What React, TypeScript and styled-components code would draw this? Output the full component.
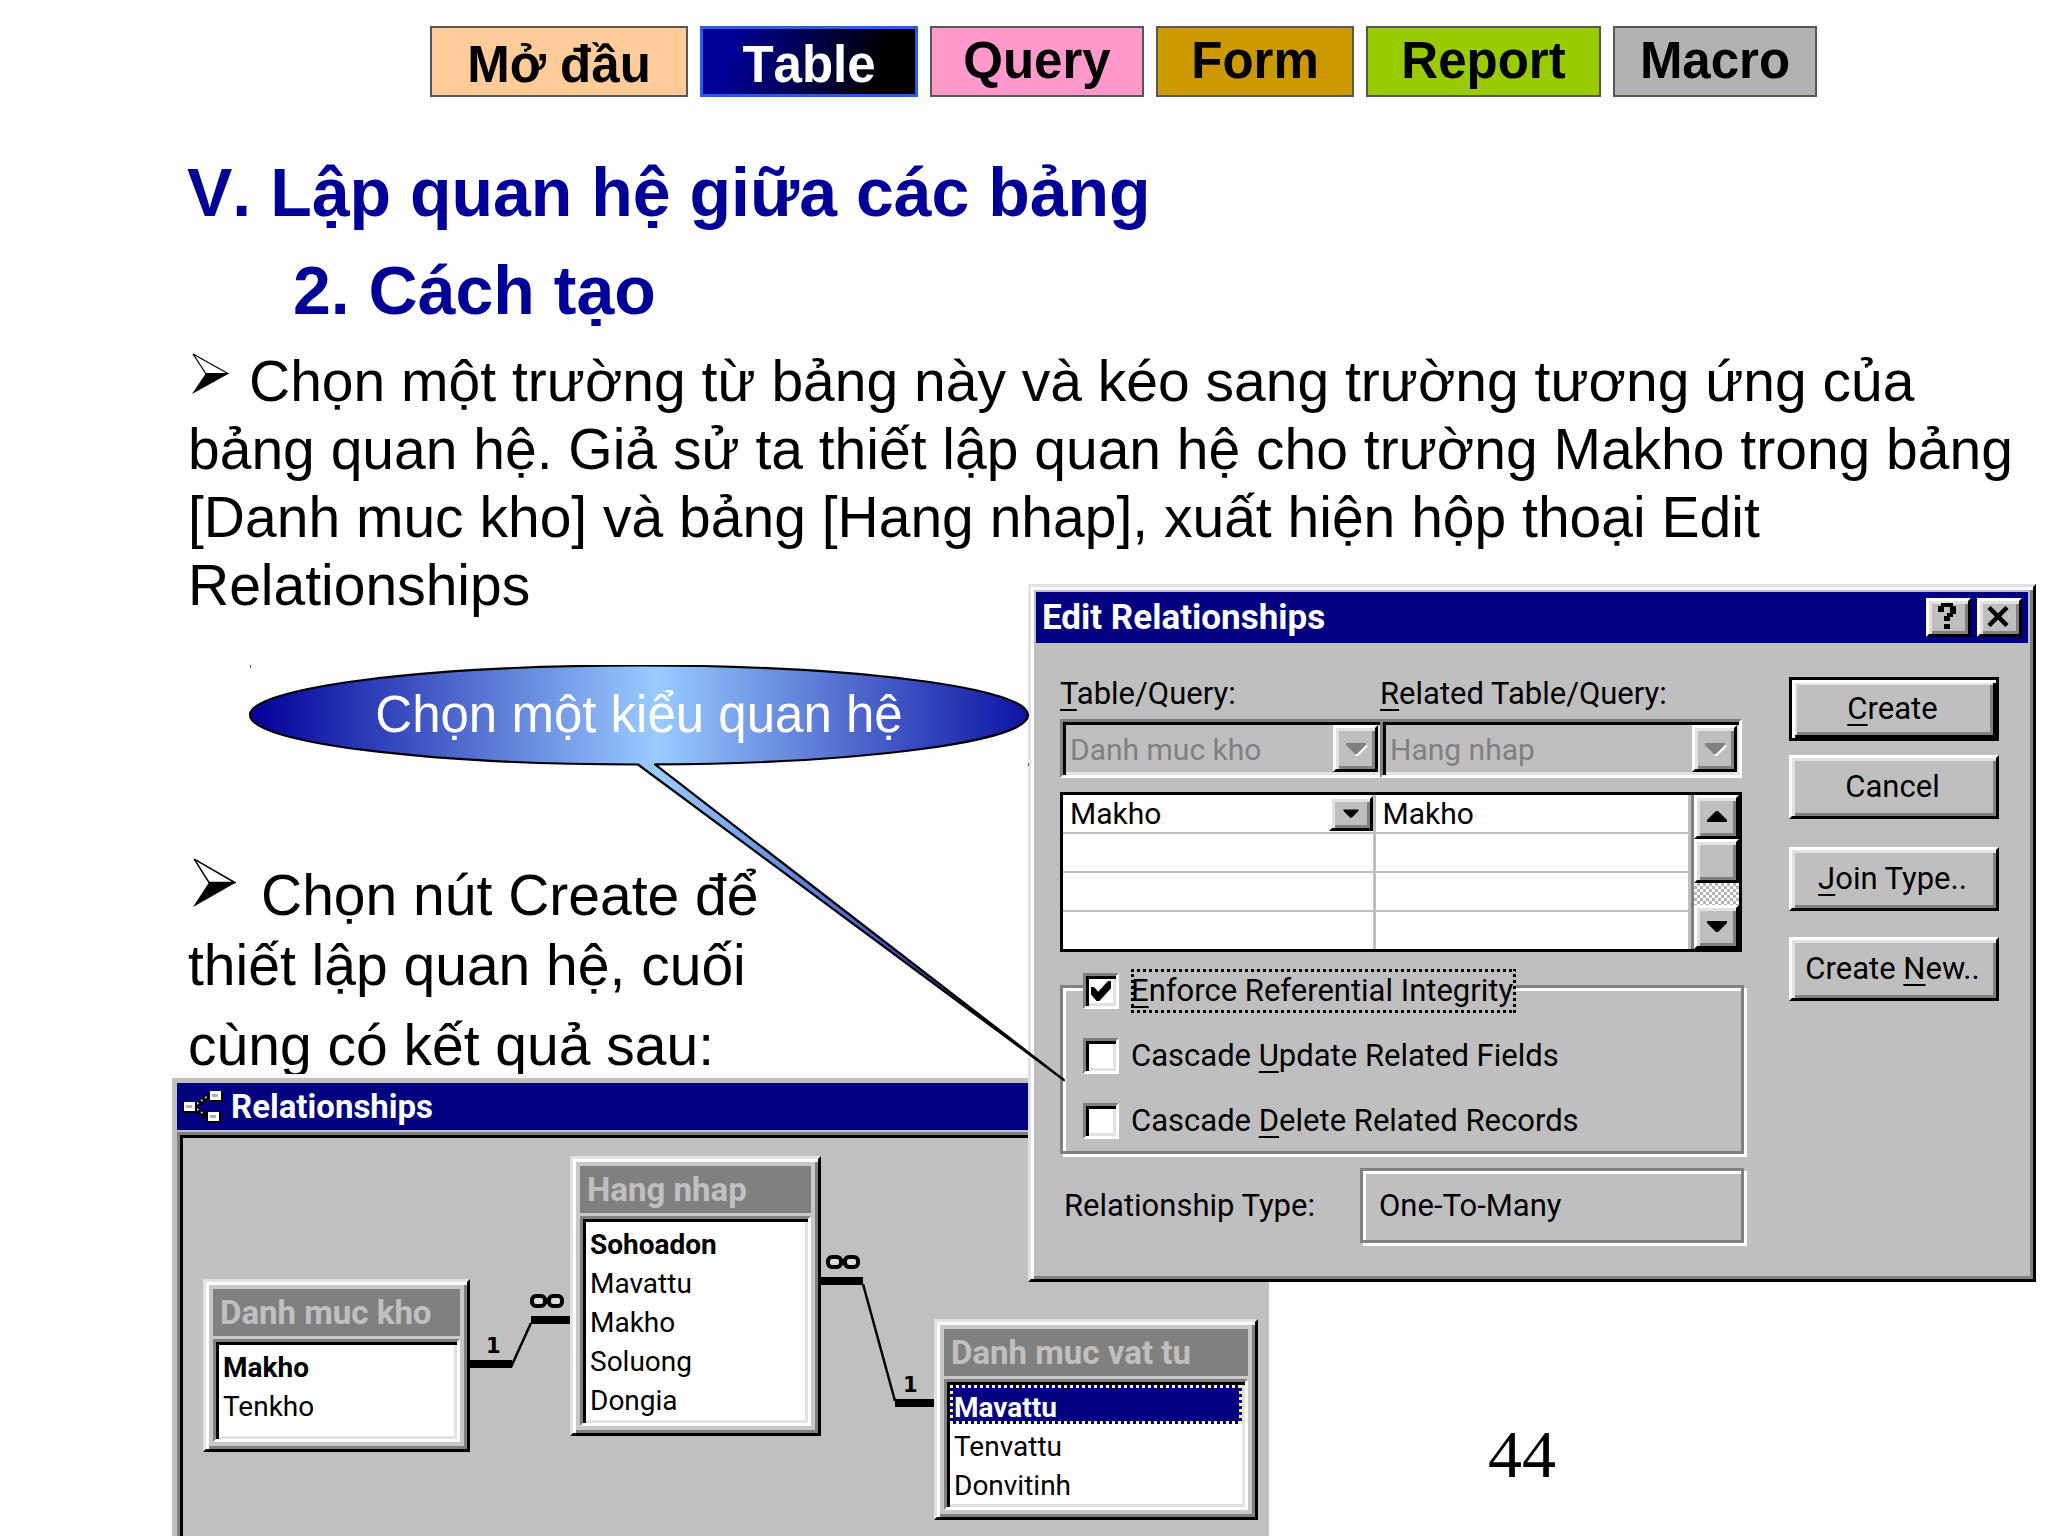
import React from 'react';
import styled, { createGlobalStyle, css } from 'styled-components';

const face = '#c0bfc0';
const shade = '#808080';
const light = '#e2e2e2';
const navy = '#000080';

const slideFont = '"Liberation Sans", Arial, sans-serif';
const systemFont = 'Roboto, "Liberation Sans", sans-serif';

const GlobalStyle = createGlobalStyle`
  *, *::before, *::after { box-sizing: border-box; }
  body { margin: 0; background: #fefefe; color: #000; font-family: ${slideFont}; }
  h1, h2, p, ul { margin: 0; padding: 0; }
`;

const raised = css`
  border: 3px solid;
  border-color: #fff #000 #000 #fff;
  box-shadow: inset 3px 3px 0 ${light}, inset -3px -3px 0 ${shade};
`;

const sunken = css`
  border: 3px solid;
  border-color: ${shade} #fff #fff ${shade};
  box-shadow: inset 3px 3px 0 #000, inset -3px -3px 0 ${light};
`;

const etched = css`
  border: 3px solid ${shade};
  box-shadow: inset 3px 3px 0 #fff, 3px 3px 0 #fff;
`;

const frame = css`
  border: 3px solid;
  border-color: ${light} #000 #000 ${light};
  box-shadow: inset 3px 3px 0 #fff, inset -3px -3px 0 ${shade};
`;

const dots = (color: string) => css`
  background-image:
    repeating-linear-gradient(90deg, ${color} 0 3px, transparent 3px 6px),
    repeating-linear-gradient(90deg, ${color} 0 3px, transparent 3px 6px),
    repeating-linear-gradient(0deg, ${color} 0 3px, transparent 3px 6px),
    repeating-linear-gradient(0deg, ${color} 0 3px, transparent 3px 6px);
  background-size: 100% 3px, 100% 3px, 3px 100%, 3px 100%;
  background-position: 0 0, 0 100%, 0 0, 100% 0;
  background-repeat: no-repeat;
`;

/* ---------- slide ---------- */

const Slide = styled.main`
  position: relative;
  display: flex;
  flex-direction: column;
  min-height: 100vh;
  overflow: hidden;
`;

const Nav = styled.nav`
  display: flex;
  gap: 12px;
  padding: 26px 0 0 430px;
`;

const NavLink = styled.a<{ $width: number; $fill: string; $active?: boolean; $low?: boolean }>`
  flex: 0 0 ${(p) => p.$width}px;
  height: 71px;
  padding-top: ${(p) => (p.$low ? 11 : 7)}px;
  border: 2px solid #5c5650;
  background: ${(p) => p.$fill};
  color: #000;
  font-size: 51px;
  font-weight: 700;
  font-kerning: none;
  line-height: 52px;
  text-align: center;
  text-decoration: none;
  ${(p) =>
    p.$active &&
    css`
      border: 3px solid #2f5be0;
      padding-top: 10px;
      color: #fff;
    `}
`;

const Headings = styled.header`
  padding: 46px 20px 0 187px;
  color: #000099;
  font-kerning: none;
`;

const Title = styled.h1`
  font-size: 68px;
  line-height: 98px;
`;

const Subtitle = styled.h2`
  padding-left: 106px;
  font-size: 68px;
  line-height: 98px;
`;

const Lead = styled.p`
  padding: 8px 20px 0 188px;
  font-size: 57px;
  line-height: 68px;
`;

const Steps = styled.div`
  width: 780px;
  padding: 239px 0 0 188px;
  font-size: 57px;
`;

const Step = styled.p`
  line-height: 70px;
`;

const StepEnd = styled.p`
  padding-top: 10px;
  line-height: 70px;
  white-space: nowrap;
`;

const BulletMark = styled.svg<{ $wide?: boolean }>`
  width: ${(p) => (p.$wide ? 43 : 37)}px;
  height: ${(p) => (p.$wide ? 49 : 41)}px;
  margin: ${(p) => (p.$wide ? '0 25px 8px 5px' : '0 20px 7px 4px')};
  vertical-align: baseline;
`;

const BottomRow = styled.div`
  flex: 1;
  display: flex;
  align-items: stretch;
  margin-top: -6px;
  padding-left: 172px;
`;

const PageNumber = styled.footer`
  align-self: flex-end;
  padding: 0 0 44px 219px;
  font-family: "Liberation Serif", "Times New Roman", serif;
  font-size: 68px;
  line-height: 78px;
`;

/* ---------- relationships window ---------- */

const MapWindow = styled.section`
  position: relative;
  flex: 0 0 1097px;
  display: flex;
  flex-direction: column;
  height: 463px;
  padding: 5px 0 0 5px;
  border-top: 4px solid #f8f8f8;
  background: #c0c0c0;
  font-family: ${systemFont};
`;

const MapTitle = styled.div`
  display: flex;
  align-items: center;
  gap: 8px;
  height: 47px;
  padding-left: 6px;
  background: ${navy};
  color: #fff;
  font-size: 33px;
  font-weight: 700;
  line-height: 46px;
`;

const Canvas = styled.div`
  position: relative;
  flex: 1;
  margin: 5px 0 0 3px;
  border: solid #000;
  border-width: 3px 0 0 3px;
  outline: 3px solid ${shade};
  clip-path: inset(-3px 0 0 -3px);
`;

const Links = styled.svg`
  position: absolute;
  left: 0;
  top: 0;
  width: 1086px;
  height: 399px;
`;

const Node = styled.article<{ $x: number; $y: number; $w: number; $h: number }>`
  position: absolute;
  left: ${(p) => p.$x}px;
  top: ${(p) => p.$y}px;
  display: flex;
  flex-direction: column;
  gap: 3px;
  width: ${(p) => p.$w}px;
  height: ${(p) => p.$h}px;
  padding: 7px;
  background: #c8c8c8;
  ${frame}
`;

const NodeTitle = styled.div`
  height: 47px;
  padding: 2px 0 0 7px;
  background: ${shade};
  color: #c0c0c0;
  font-size: 33px;
  font-weight: 700;
  line-height: 44px;
  white-space: nowrap;
`;

const FieldList = styled.ul`
  flex: 1;
  padding: 3px;
  background: #fff;
  list-style: none;
  ${sunken}
`;

const FieldItem = styled.li<{ $key?: boolean; $selected?: boolean }>`
  height: 39px;
  padding: 7px 0 0 4px;
  font-size: 28px;
  font-weight: ${(p) => (p.$key ? 700 : 400)};
  line-height: 32px;
  ${(p) =>
    p.$selected &&
    css`
      background-color: ${navy};
      color: #fff;
      ${dots('#ffff80')}
    `}
`;

/* ---------- dialog ---------- */

const Dialog = styled.section`
  position: absolute;
  left: 1028px;
  top: 584px;
  width: 1008px;
  height: 698px;
  padding: 5px;
  background: ${face};
  font-family: ${systemFont};
  font-size: 31px;
  line-height: 36px;
  ${frame}

  u {
    text-decoration-thickness: 2px;
    text-underline-offset: 5px;
    text-decoration-skip-ink: none;
  }
`;

const DialogTitle = styled.div`
  display: flex;
  align-items: center;
  gap: 6px;
  height: 51px;
  padding: 0 6px 0 6px;
  background: ${navy};
  color: #fff;
  font-size: 35px;
  font-weight: 700;
  line-height: 50px;
`;

const DialogName = styled.span`
  flex: 1;
`;

const CaptionButton = styled.button`
  display: grid;
  place-items: center;
  width: 45px;
  height: 39px;
  padding: 0 3px 3px 0;
  background: ${face};
  ${raised}
`;

const DialogBody = styled.div`
  display: grid;
  grid-template-columns: 1fr 210px;
  gap: 42px;
  padding: 33px 29px 0 24px;
`;

const Form = styled.div`
  display: flex;
  flex-direction: column;
`;

const ComboRow = styled.div`
  display: grid;
  grid-template-columns: 320px 1fr;
  margin-right: 5px;
`;

const Field = styled.div`
  display: flex;
  flex-direction: column;
  gap: 7px;
`;

const Combo = styled.div<{ $joined?: boolean }>`
  display: flex;
  height: 59px;
  font-size: 30px;
  ${sunken}
  ${(p) => p.$joined && 'border-right-width: 0;'}
`;

const ComboSelect = styled.select`
  flex: 1;
  min-width: 0;
  padding: 2px 0 0 7px;
  border: 0;
  appearance: none;
  background: transparent;
  color: #000;
  font: inherit;

  &:disabled {
    color: ${shade};
    opacity: 1;
  }
`;

const ComboArrow = styled.span`
  display: grid;
  place-items: center;
  width: 45px;
  margin: 3px 2px 3px 0;
  background: ${face};
  ${raised}
`;

const GridBox = styled.div`
  display: flex;
  width: 682px;
  height: 160px;
  margin-top: 14px;
  border: 3px solid #000;
  background: #fff;
  font-size: 30px;
`;

const TableArea = styled.div`
  flex: 1;
`;

const FieldTable = styled.table`
  width: 100%;
  table-layout: fixed;
  border-spacing: 0;
`;

const Cell = styled.td`
  width: 50%;
  height: 39px;
  padding: 0;
  border-bottom: 2px solid ${face};

  &:first-child {
    border-right: 3px solid ${face};
  }

  tr:last-child > & {
    height: 37px;
    border-bottom: 0;
  }
`;

const CellContent = styled.div`
  display: flex;
  align-items: center;
  justify-content: space-between;
  height: 37px;
  padding-left: 7px;
`;

const CellArrow = styled.button`
  display: grid;
  place-items: center;
  width: 44px;
  height: 35px;
  padding: 0;
  background: ${face};
  ${raised}
`;

const ScrollBar = styled.div`
  display: flex;
  flex-direction: column;
  width: 51px;
  border-left: 3px solid ${face};
  box-shadow: inset 3px 0 0 ${shade};
  padding-left: 3px;
`;

const ScrollButton = styled.button`
  display: grid;
  place-items: center;
  height: 44px;
  padding: 0;
  background: ${face};
  ${raised}
`;

const ScrollTrack = styled.div`
  flex: 1;
  background: repeating-conic-gradient(#b4b4b4 0 25%, #fff 0 50%) 0 0 / 6px 6px;
`;

const CheckGroup = styled.div`
  display: flex;
  flex-direction: column;
  align-items: flex-start;
  gap: 21px;
  height: 169px;
  margin: 33px 3px 0 0;
  padding-left: 20px;
  ${etched}
`;

const CheckRow = styled.label`
  display: flex;
  align-items: center;
  gap: 12px;
  height: 44px;

  &:first-child {
    margin-top: -19px;
    background: ${face};
  }
`;

const CheckBox = styled.input`
  display: grid;
  place-content: center;
  width: 36px;
  height: 36px;
  margin: 0;
  appearance: none;
  background: #fff;
  ${sunken}

  &:checked::before {
    content: "";
    width: 20px;
    height: 20px;
    background: #000;
    clip-path: polygon(0 30%, 15% 30%, 36% 54%, 85% 0, 100% 0, 100% 36%, 42% 100%, 28% 100%, 0 68%);
  }
`;

const CheckText = styled.span<{ $focused?: boolean }>`
  padding: 4px 3px 4px 0;
  ${(p) => p.$focused && dots('#000')}
`;

const TypeRow = styled.div`
  display: flex;
  align-items: center;
  justify-content: space-between;
  margin: 14px 3px 0 0;
  padding-left: 4px;
`;

const TypeBox = styled.output`
  width: 384px;
  height: 75px;
  padding-left: 16px;
  line-height: 70px;
  ${etched}
`;

const Actions = styled.div`
  display: flex;
  flex-direction: column;
  padding-top: 1px;
`;

const ActionButton = styled.button<{ $gap?: number; $primary?: boolean }>`
  height: 64px;
  margin-top: ${(p) => p.$gap ?? 0}px;
  padding: 0 3px 0 0;
  background: ${face};
  color: #000;
  font: inherit;
  white-space: nowrap;
  ${raised}
  ${(p) =>
    p.$primary &&
    css`
      border-color: #000;
      box-shadow: inset 3px 3px 0 #fff, inset -3px -3px 0 #000, inset 5px 5px 0 ${light}, inset -6px -6px 0 ${shade};
    `}
`;

/* ---------- callout ---------- */

const Callout = styled.aside`
  position: absolute;
  left: 249px;
  top: 665px;
  width: 820px;
  pointer-events: none;
`;

const CalloutShape = styled.svg`
  position: absolute;
  left: 0;
  top: 0;
`;

const CalloutText = styled.p`
  position: relative;
  width: 780px;
  color: #fff;
  font-size: 51px;
  line-height: 100px;
  text-align: center;
`;

/* ---------- drawings ---------- */

const Bullet = ({ wide }: { wide?: boolean }) => (
  <BulletMark $wide={wide} viewBox="0 0 35 40" preserveAspectRatio="none" aria-hidden="true">
    <path d="M1 1 L34 20 L13 20 Z" fill="#fff" stroke="#000" strokeWidth="1.2" />
    <path d="M0 40 L13 20 L35 20 Z" fill="#000" />
  </BulletMark>
);

const Triangle = ({ up, muted, small }: { up?: boolean; muted?: boolean; small?: boolean }) => (
  <svg width={small ? 18 : 24} height={small ? 12 : 16} viewBox="0 0 24 16" aria-hidden="true">
    {muted && <path d="M24 5 L14 15 L11 15 L20 3 Z" fill="#fff" />}
    {up ? (
      <path d="M2 13 H22 V11 L13 2 H11 L2 11 Z" fill="#000" />
    ) : (
      <path d="M2 2 H22 V4 L13 13 H11 L2 4 Z" fill={muted ? shade : '#000'} />
    )}
  </svg>
);

const HelpGlyph = () => (
  <svg width="18" height="27" viewBox="0 0 18 27" shapeRendering="crispEdges" aria-hidden="true">
    <path d="M3 0H15V3H18V11H15V14H12V18H6V13H9V10H12V4H6V9H0V3H3Z M6 21H12V26H6Z" fill="#000" />
  </svg>
);

const CloseGlyph = () => (
  <svg width="24" height="21" viewBox="0 0 24 21" aria-hidden="true">
    <path d="M3 1.5 L21 19.5 M21 1.5 L3 19.5" stroke="#000" strokeWidth="4.5" />
  </svg>
);

const MapIcon = () => (
  <svg width="40" height="32" viewBox="0 0 40 32" aria-hidden="true">
    <path d="M12 15 L26 5 M12 17 L24 26" stroke="#000" strokeWidth="5" />
    <path d="M14 13 L26 4 M14 18 L22 24" stroke="#c0c0c0" strokeWidth="2" strokeDasharray="2 3" />
    {[
      [0, 11],
      [26, 0],
      [24, 21],
    ].map(([x, y]) => (
      <g key={x}>
        <rect x={x} y={y} width="14" height="11" fill="#000" />
        <rect x={x + 1} y={y} width="11" height="9" fill="#fff" />
        <rect x={x + 3} y={y + 3} width="6" height="3" fill="#b0b0b0" />
      </g>
    ))}
  </svg>
);

const ManySign = ({ x, y }: { x: number; y: number }) => (
  <g transform={`translate(${x} ${y})`} fill="#dcdcdc" stroke="#000" strokeWidth="4">
    <rect x="2" y="2" width="13" height="10" rx="4" />
    <rect x="19" y="2" width="13" height="10" rx="4" />
    <path d="M14 7 H20" strokeWidth="6" />
  </g>
);

/* ---------- data ---------- */

const navItems = [
  { label: 'Mở đầu', width: 258, fill: '#ffcc99', low: true },
  { label: 'Table', width: 218, fill: 'linear-gradient(100deg, #000099 12%, #000 85%)', active: true },
  { label: 'Query', width: 214, fill: '#ff99cc' },
  { label: 'Form', width: 198, fill: '#cc9900' },
  { label: 'Report', width: 235, fill: '#99cc00' },
  { label: 'Macro', width: 204, fill: '#b2b2b2' },
];

const nodes = [
  { name: 'Danh muc kho', x: 20, y: 141, w: 267, h: 173, fields: ['Makho', 'Tenkho'] },
  { name: 'Hang nhap', x: 387, y: 18, w: 251, h: 280, fields: ['Sohoadon', 'Mavattu', 'Makho', 'Soluong', 'Dongia'] },
  { name: 'Danh muc vat tu', x: 751, y: 181, w: 324, h: 201, fields: ['Mavattu', 'Tenvattu', 'Donvitinh'], selected: 0 },
];

export default function App() {
  return (
    <>
      <GlobalStyle />
      <Slide>
        <Nav>
          {navItems.map((item) => (
            <NavLink
              key={item.label}
              href={`#${item.label}`}
              $width={item.width}
              $fill={item.fill}
              $active={item.active}
              $low={item.low}
            >
              {item.label}
            </NavLink>
          ))}
        </Nav>

        <Headings>
          <Title>V. Lập quan hệ giữa các bảng</Title>
          <Subtitle>2. Cách tạo</Subtitle>
        </Headings>

        <Lead>
          <Bullet />
          Chọn một trường từ bảng này và kéo sang trường tương ứng của bảng quan hệ. Giả sử ta thiết lập quan hệ cho
          trường Makho trong bảng [Danh muc kho] và bảng [Hang nhap], xuất hiện hộp thoại Edit Relationships
        </Lead>

        <Steps>
          <Step>
            <Bullet wide />
            Chọn nút Create để thiết lập quan hệ, cuối
          </Step>
          <StepEnd>cùng có kết quả sau:</StepEnd>
        </Steps>

        <BottomRow>
          <MapWindow aria-label="Relationships">
            <MapTitle>
              <MapIcon />
              Relationships
            </MapTitle>
            <Canvas>
              {nodes.map((node) => (
                <Node key={node.name} $x={node.x} $y={node.y} $w={node.w} $h={node.h}>
                  <NodeTitle>{node.name}</NodeTitle>
                  <FieldList>
                    {node.fields.map((field, i) => (
                      <FieldItem key={field} $key={i === 0} $selected={node.selected === i}>
                        {field}
                      </FieldItem>
                    ))}
                  </FieldList>
                </Node>
              ))}
              <Links viewBox="0 0 1086 399" fontFamily="DejaVu Sans" fontWeight="700" fontSize="21">
                <path d="M287 226 H329 M348 182 H387 M638 143 H680 M712 265 H751" stroke="#000" strokeWidth="8" />
                <path d="M328 229 L348 185 M680 146 L712 263" stroke="#000" strokeWidth="2.5" />
                <ManySign x={347} y={156} />
                <ManySign x={643} y={117} />
                <text x="303" y="215">1</text>
                <text x="720" y="254">1</text>
              </Links>
            </Canvas>
          </MapWindow>
          <PageNumber>44</PageNumber>
        </BottomRow>

        <Dialog role="dialog" aria-label="Edit Relationships">
          <DialogTitle>
            <DialogName>Edit Relationships</DialogName>
            <CaptionButton type="button" aria-label="Help">
              <HelpGlyph />
            </CaptionButton>
            <CaptionButton type="button" aria-label="Close">
              <CloseGlyph />
            </CaptionButton>
          </DialogTitle>
          <DialogBody>
            <Form>
              <ComboRow>
                <Field>
                  <label htmlFor="table">
                    <u>T</u>able/Query:
                  </label>
                  <Combo $joined>
                    <ComboSelect id="table" disabled>
                      <option>Danh muc kho</option>
                    </ComboSelect>
                    <ComboArrow>
                      <Triangle muted />
                    </ComboArrow>
                  </Combo>
                </Field>
                <Field>
                  <label htmlFor="related">
                    <u>R</u>elated Table/Query:
                  </label>
                  <Combo>
                    <ComboSelect id="related" disabled>
                      <option>Hang nhap</option>
                    </ComboSelect>
                    <ComboArrow>
                      <Triangle muted />
                    </ComboArrow>
                  </Combo>
                </Field>
              </ComboRow>

              <GridBox>
                <TableArea>
                  <FieldTable>
                    <tbody>
                      <tr>
                        <Cell>
                          <CellContent>
                            Makho
                            <CellArrow type="button" aria-label="Choose field">
                              <Triangle small />
                            </CellArrow>
                          </CellContent>
                        </Cell>
                        <Cell>
                          <CellContent>Makho</CellContent>
                        </Cell>
                      </tr>
                      {[1, 2, 3].map((row) => (
                        <tr key={row}>
                          <Cell />
                          <Cell />
                        </tr>
                      ))}
                    </tbody>
                  </FieldTable>
                </TableArea>
                <ScrollBar>
                  <ScrollButton type="button" aria-label="Scroll up">
                    <Triangle up />
                  </ScrollButton>
                  <ScrollButton type="button" aria-label="Scroll thumb" />
                  <ScrollTrack />
                  <ScrollButton type="button" aria-label="Scroll down">
                    <Triangle />
                  </ScrollButton>
                </ScrollBar>
              </GridBox>

              <CheckGroup role="group">
                <CheckRow>
                  <CheckBox type="checkbox" defaultChecked />
                  <CheckText $focused>
                    <u>E</u>nforce Referential Integrity
                  </CheckText>
                </CheckRow>
                <CheckRow>
                  <CheckBox type="checkbox" />
                  <CheckText>
                    Cascade <u>U</u>pdate Related Fields
                  </CheckText>
                </CheckRow>
                <CheckRow>
                  <CheckBox type="checkbox" />
                  <CheckText>
                    Cascade <u>D</u>elete Related Records
                  </CheckText>
                </CheckRow>
              </CheckGroup>

              <TypeRow>
                Relationship Type:
                <TypeBox>One-To-Many</TypeBox>
              </TypeRow>
            </Form>

            <Actions>
              <ActionButton type="button" $primary>
                <u>C</u>reate
              </ActionButton>
              <ActionButton type="button" $gap={14}>
                Cancel
              </ActionButton>
              <ActionButton type="button" $gap={28}>
                <u>J</u>oin Type..
              </ActionButton>
              <ActionButton type="button" $gap={26}>
                Create <u>N</u>ew..
              </ActionButton>
            </Actions>
          </DialogBody>
        </Dialog>

        <Callout>
          <CalloutShape width="820" height="418" viewBox="0 0 820 418" aria-hidden="true">
            <defs>
              <linearGradient id="glow" x1="0" x2="1" y1="0" y2="0">
                <stop offset="0" stopColor="#000099" />
                <stop offset="0.5" stopColor="#99ccff" />
                <stop offset="1" stopColor="#000099" />
              </linearGradient>
            </defs>
            <path
              d="M389 99.500 L815 415 L406 99.460 A389 49.500 0 0 0 779 50 A389 49.500 0 0 0 1 50 A389 49.500 0 0 0 389 99.500 Z"
              fill="url(#glow)"
              stroke="#000"
              strokeWidth="2.200"
              strokeLinejoin="round"
            />
            <path d="M1.500 0 V3 M779.500 98 V101" stroke="#555" strokeWidth="1" />
          </CalloutShape>
          <CalloutText>Chọn một kiểu quan hệ</CalloutText>
        </Callout>
      </Slide>
    </>
  );
}
